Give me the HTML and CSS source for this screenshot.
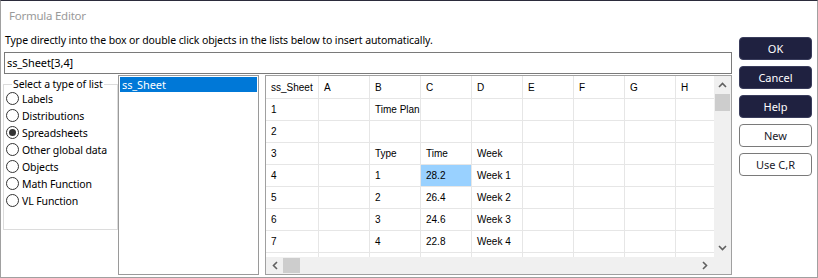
FILE: index.html
```html
<!DOCTYPE html>
<html>
<head>
<meta charset="utf-8">
<link rel="stylesheet" href="styles.css">
</head>
<body>
<div class="window">
  <div class="titlebar">Formula Editor</div>
  <div class="body">
    <div class="main">
      <div class="hint">Type directly into the box or double click objects in the lists below to insert automatically.</div>
      <div class="formula">ss_Sheet[3,4]</div>
      <div class="panes">
        <fieldset class="group">
          <legend>Select a type of list</legend>
          <div class="radio"><span class="dot"></span>Labels</div>
          <div class="radio"><span class="dot"></span>Distributions</div>
          <div class="radio"><span class="dot on"></span>Spreadsheets</div>
          <div class="radio"><span class="dot"></span>Other global data</div>
          <div class="radio"><span class="dot"></span>Objects</div>
          <div class="radio"><span class="dot"></span>Math Function</div>
          <div class="radio"><span class="dot"></span>VL Function</div>
        </fieldset>
        <div class="listbox">
          <div class="item sel">ss_Sheet</div>
        </div>
        <div class="sheet">
          <div class="cells">
            <div class="row head"><div class="c c0">ss_Sheet</div><div class="c">A</div><div class="c">B</div><div class="c">C</div><div class="c">D</div><div class="c">E</div><div class="c">F</div><div class="c">G</div><div class="c">H</div><div class="c"></div></div>
            <div class="row"><div class="c c0">1</div><div class="c"></div><div class="c wide">Time Plan</div><div class="c"></div><div class="c"></div><div class="c"></div><div class="c"></div><div class="c"></div><div class="c"></div><div class="c"></div></div>
            <div class="row"><div class="c c0">2</div><div class="c"></div><div class="c"></div><div class="c"></div><div class="c"></div><div class="c"></div><div class="c"></div><div class="c"></div><div class="c"></div><div class="c"></div></div>
            <div class="row"><div class="c c0">3</div><div class="c"></div><div class="c">Type</div><div class="c">Time</div><div class="c">Week</div><div class="c"></div><div class="c"></div><div class="c"></div><div class="c"></div><div class="c"></div></div>
            <div class="row"><div class="c c0">4</div><div class="c"></div><div class="c">1</div><div class="c hl">28.2</div><div class="c">Week 1</div><div class="c"></div><div class="c"></div><div class="c"></div><div class="c"></div><div class="c"></div></div>
            <div class="row"><div class="c c0">5</div><div class="c"></div><div class="c">2</div><div class="c">26.4</div><div class="c">Week 2</div><div class="c"></div><div class="c"></div><div class="c"></div><div class="c"></div><div class="c"></div></div>
            <div class="row"><div class="c c0">6</div><div class="c"></div><div class="c">3</div><div class="c">24.6</div><div class="c">Week 3</div><div class="c"></div><div class="c"></div><div class="c"></div><div class="c"></div><div class="c"></div></div>
            <div class="row"><div class="c c0">7</div><div class="c"></div><div class="c">4</div><div class="c">22.8</div><div class="c">Week 4</div><div class="c"></div><div class="c"></div><div class="c"></div><div class="c"></div><div class="c"></div></div>
            <div class="row"><div class="c c0"></div><div class="c"></div><div class="c"></div><div class="c"></div><div class="c"></div><div class="c"></div><div class="c"></div><div class="c"></div><div class="c"></div><div class="c"></div></div>
          </div>
          <div class="vscroll">
            <svg class="arr" width="9" height="6" viewBox="0 0 9 6"><path d="M1 5 L4.5 1.5 L8 5" fill="none" stroke="#606060" stroke-width="1.6"/></svg>
            <div class="vthumb"></div>
            <div class="spacer"></div>
            <svg class="arr" width="9" height="6" viewBox="0 0 9 6"><path d="M1 1 L4.5 4.5 L8 1" fill="none" stroke="#606060" stroke-width="1.6"/></svg>
          </div>
          <div class="hscroll">
            <svg class="arr" width="6" height="9" viewBox="0 0 6 9"><path d="M5 1 L1.5 4.5 L5 8" fill="none" stroke="#606060" stroke-width="1.6"/></svg>
            <div class="hthumb"></div>
            <div class="spacer"></div>
            <svg class="arr" width="6" height="9" viewBox="0 0 6 9"><path d="M1 1 L4.5 4.5 L1 8" fill="none" stroke="#606060" stroke-width="1.6"/></svg>
          </div>
          <div class="corner"></div>
        </div>
      </div>
    </div>
    <div class="buttons">
      <div class="btn dark">OK</div>
      <div class="btn dark">Cancel</div>
      <div class="btn dark">Help</div>
      <div class="btn light">New</div>
      <div class="btn light">Use C,R</div>
    </div>
  </div>
</div>
</body>
</html>
```
FILE: styles.css
```css
html, body {
  margin: 0;
  padding: 0;
  background: #ffffff;
}
body {
  width: 818px;
  height: 278px;
  overflow: hidden;
  font-family: "Noto Sans", "Open Sans", sans-serif;
  font-size: 10.5px;
  letter-spacing: -0.1px;
  color: #000;
}
.window {
  box-sizing: border-box;
  width: 818px;
  height: 278px;
  border: 1px solid #a0a0a0;
  border-top-color: #2b2b3b;
  display: flex;
  flex-direction: column;
}
.titlebar {
  height: 29px;
  line-height: 30px;
  padding-left: 8px;
  color: #9a9a9a;
  font-size: 11.5px;
  letter-spacing: -0.25px;
}
.body {
  display: flex;
  flex: 1;
  min-height: 0;
}
.main {
  width: 729px;
  padding-left: 2px;
  display: flex;
  flex-direction: column;
}
.hint {
  height: 22px;
  line-height: 20px;
  padding-left: 2px;
  white-space: nowrap;
}
.formula {
  box-sizing: border-box;
  height: 22px;
  margin-left: 1px;
  border: 1px solid #7a7a7a;
  padding-left: 2px;
  line-height: 19px;
  font-size: 11px;
}
.panes {
  display: flex;
  margin-top: 1px;
  height: 200px;
}
.group {
  box-sizing: border-box;
  margin: 2px 0 0 0;
  padding: 0 0 0 2px;
  width: 115px;
  height: 153px;
  border: 1px solid #dcdcdc;
  min-width: 0;
}
.group legend {
  padding: 0 1px;
  margin-left: 6px;
  line-height: 15px;
  white-space: nowrap;
  margin-bottom: -2px;
}
.radio {
  display: flex;
  align-items: center;
  height: 17px;
  white-space: nowrap;
}
.dot {
  box-sizing: border-box;
  width: 13px;
  height: 13px;
  border: 1px solid #333;
  border-radius: 50%;
  margin-right: 3px;
  display: flex;
  align-items: center;
  justify-content: center;
  flex: none;
}
.dot.on::after {
  content: "";
  width: 7px;
  height: 7px;
  border-radius: 50%;
  background: #333;
}
.listbox {
  box-sizing: border-box;
  width: 141px;
  height: 200px;
  border: 1px solid #9a9a9a;
  padding: 1px;
}
.item {
  height: 15px;
  line-height: 15px;
  padding-left: 2px;
  font-size: 11px;
}
.item.sel {
  background: #0078d7;
  color: #fff;
}
.sheet {
  box-sizing: border-box;
  margin-left: 6px;
  width: 467px;
  height: 200px;
  border: 1px solid #a0a0a0;
  display: grid;
  grid-template-columns: 448px 17px;
  grid-template-rows: 181px 17px;
  font-family: "Liberation Sans", Arial, sans-serif;
  font-size: 10px;
  letter-spacing: 0;
}
.cells {
  overflow: hidden;
}
.row {
  display: flex;
  height: 22px;
}
.row.head {
  height: 23px;
}
.c {
  box-sizing: border-box;
  flex: none;
  width: 51px;
  border-right: 1px solid #e6e6e6;
  border-bottom: 1px solid #e6e6e6;
  padding-left: 5px;
  display: flex;
  align-items: center;
  white-space: nowrap;
  overflow: hidden;
}
.c.c0 {
  width: 53px;
}
.c.wide {
  overflow: visible;
}
.c.hl {
  background: #99d1ff;
}
.vscroll {
  background: #f0f0f0;
  display: flex;
  flex-direction: column;
  align-items: center;
}
.vscroll .arr {
  margin: 6px 0;
}
.vthumb {
  width: 15px;
  height: 17px;
  background: #cdcdcd;
}
.hscroll {
  background: #f0f0f0;
  display: flex;
  align-items: center;
}
.hscroll .arr {
  margin: 0 6px;
}
.hthumb {
  width: 17px;
  height: 15px;
  background: #cdcdcd;
  margin-left: -1px;
}
.spacer {
  flex: 1;
}
.corner {
  background: #f0f0f0;
}
.buttons {
  margin-left: 7px;
  padding-top: 7px;
  display: flex;
  flex-direction: column;
  gap: 6px;
}
.btn {
  box-sizing: border-box;
  width: 73px;
  height: 23px;
  border-radius: 4px;
  display: flex;
  align-items: center;
  justify-content: center;
  font-size: 11px;
  letter-spacing: 0;
}
.btn.dark {
  background: #1f2140;
  border: 1px solid #3a3d5c;
  color: #fff;
}
.btn.light {
  background: #fff;
  border: 1px solid #7a7a7a;
  color: #1a1a2a;
}
```
